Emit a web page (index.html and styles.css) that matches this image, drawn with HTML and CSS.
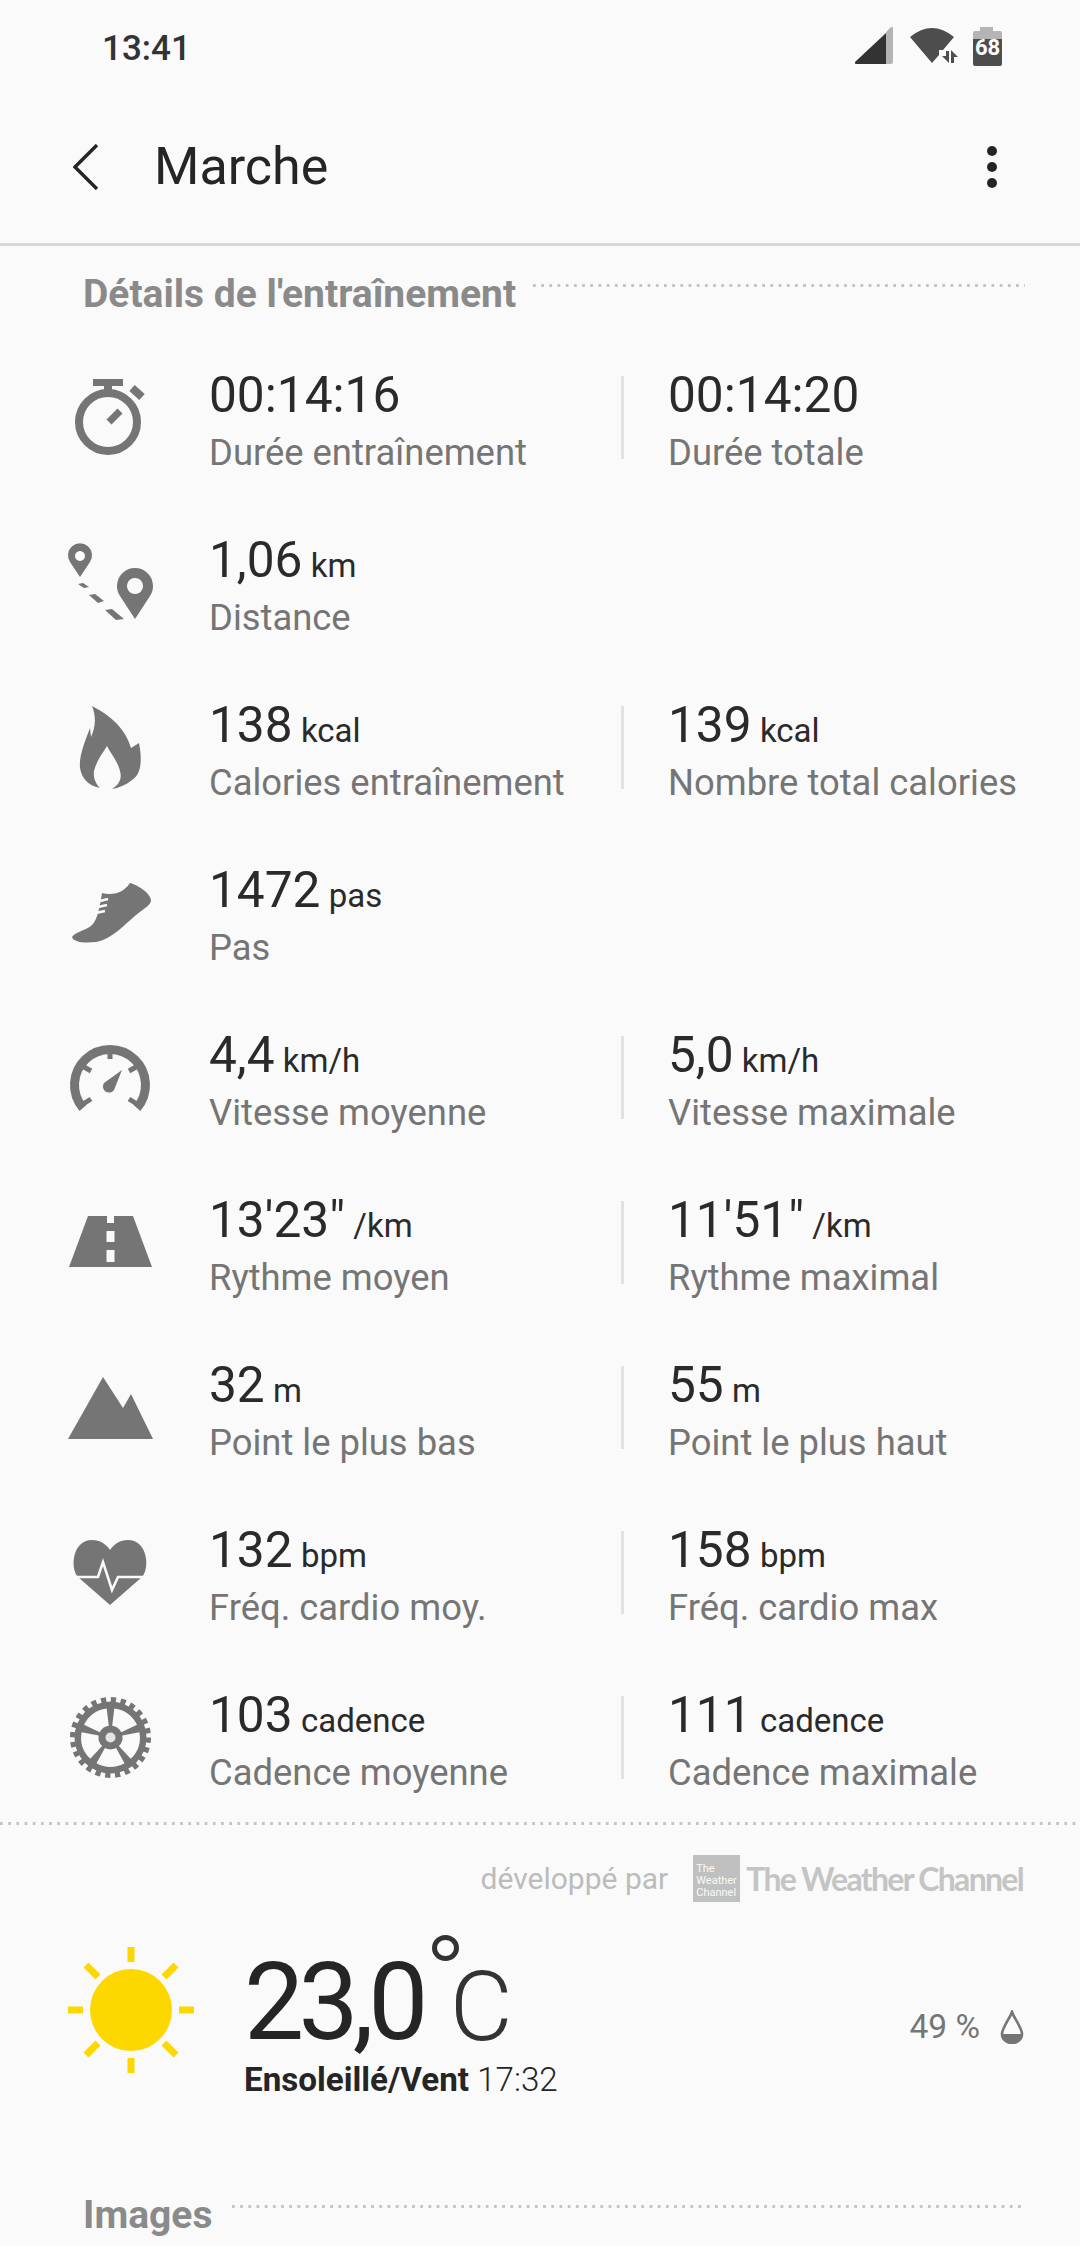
FILE: index.html
```html
<!DOCTYPE html>
<html lang="fr">
<head>
<meta charset="utf-8">
<title>Marche</title>
<link rel="stylesheet" href="styles.css">
</head>
<body>
<div class="page">
  <div class="status">
    <span class="time">13:41</span>
    <div class="status-icons">
      <svg class="st-signal" width="38" height="38" viewBox="0 0 38 38"><path d="M31 7 L0 36 Q-1 38 2 38 L31 38Z" fill="#333"/><path d="M31 6 L36 1 Q38 0 38 2 V36 Q38 38 36 38 H31Z" fill="#b4b4b4"/></svg>
      <svg class="st-wifi" width="48" height="36" viewBox="0 0 48 36"><path d="M1 10 Q23 -8 45 10 L34 23 H30 V28 L23 36Z" fill="#4d4d4d"/><path d="M37 24H40V36L33 29H37Z M42 23L49 30H45V36H42Z" fill="#4d4d4d"/></svg>
      <svg class="st-batt" width="29" height="39" viewBox="0 0 29 39"><path d="M7 0H20V4H27Q29 4 29 6V12H0V6Q0 4 2 4H7Z" fill="#b4b4b4"/><path d="M0 12H29V37Q29 39 27 39H2Q0 39 0 37Z" fill="#4d4d4d"/><text class="batt-num" x="14.500" y="27.500" text-anchor="middle">68</text></svg>
    </div>
  </div>
  <header class="bar">
    <svg class="back" width="26" height="46" viewBox="0 0 26 46"><path d="M24 1 L2 23 L24 45" fill="none" stroke="#252525" stroke-width="3.4"/></svg>
    <h1 class="title">Marche</h1>
    <div class="more"><i></i><i></i><i></i></div>
  </header>

  <div class="sec sec-first"><h2>Détails de l'entraînement</h2><span class="dots"></span></div>

  <section class="rows">
    <div class="row">
      <svg class="ic" viewBox="0 0 90 90"><circle cx="42" cy="44" r="29" fill="none" stroke="#757575" stroke-width="8"/><path d="M27 1H57V8H46V14H38V8H27Z" fill="#757575"/><path d="M66 10L76 19" stroke="#757575" stroke-width="8"/><path d="M43 44L54 33" stroke="#757575" stroke-width="7"/></svg>
      <div class="cell"><div class="val">00:14:16</div><div class="lab">Durée entraînement</div></div>
      <div class="cell cell-r"><div class="val">00:14:20</div><div class="lab">Durée totale</div></div>
    </div>
    <div class="row">
      <svg class="ic" viewBox="0 0 90 90"><path fill-rule="evenodd" d="M14 34 L4 19 A12 12 0 1 1 24 19Z M14 8 a5 5 0 1 0 .01 0Z" fill="#757575"/><path fill-rule="evenodd" d="M69 76 L54 53 A18 18 0 1 1 84 53Z M69 35 a8 8 0 1 0 .01 0Z" fill="#757575"/><path d="M12 41L17 40L23 44L18 45Z M23 52L29 51L38 58L32 60Z M39 67L46 66L58 76L50 77Z" fill="#757575"/></svg>
      <div class="cell"><div class="val">1,06 <small>km</small></div><div class="lab">Distance</div></div>
    </div>
    <div class="row">
      <svg class="ic" viewBox="0 0 90 90"><path d="M26 -2 C46 8 60 22 65 40 L73 35 C76 50 76 66 66 72 C60 77 52 80 46 81 C54 76 56 70 54 63 C52 54 45 46 41 38 C36 46 30 54 28 63 C27 70 30 76 34 80 C24 78 16 72 14 60 C13 48 18 36 24 20 L25 29 C30 18 30 8 26 -2Z" fill="#757575"/></svg>
      <div class="cell"><div class="val">138 <small>kcal</small></div><div class="lab">Calories entraînement</div></div>
      <div class="cell cell-r"><div class="val">139 <small>kcal</small></div><div class="lab">Nombre total calories</div></div>
    </div>
    <div class="row">
      <svg class="ic" viewBox="0 0 90 90"><path d="M6 64 C10 58 20 58 26 52 C32 46 34 32 36 20 C44 22 56 22 64 10 C72 12 84 20 85 27 C85 32 80 34 70 42 C58 52 46 66 30 69 C20 70 8 70 6 64Z" fill="#757575"/><path d="M34 28L42 26M32 34L41 32M30 40L39 38" stroke="#fafafa" stroke-width="2.4"/></svg>
      <div class="cell"><div class="val">1472 <small>pas</small></div><div class="lab">Pas</div></div>
    </div>
    <div class="row">
      <svg class="ic" viewBox="0 0 90 90"><path d="M17 70 A35.500 35.500 0 1 1 71 70" fill="none" stroke="#757575" stroke-width="9"/><path d="M44 12V21M18 29L25 33M70 29L63 33M17 66L25 61M71 66L63 61" stroke="#757575" stroke-width="5"/><path d="M56 32L48 52A6 6 0 1 1 38 45Z" fill="#757575"/></svg>
      <div class="cell"><div class="val">4,4 <small>km/h</small></div><div class="lab">Vitesse moyenne</div></div>
      <div class="cell cell-r"><div class="val">5,0 <small>km/h</small></div><div class="lab">Vitesse maximale</div></div>
    </div>
    <div class="row">
      <svg class="ic" viewBox="0 0 90 90"><path d="M22 13H41V20H48V13H67L86 64H3Z M40.500 28V39H48.500V28Z M40.500 47V59H48.500V47Z" fill-rule="evenodd" fill="#757575"/></svg>
      <div class="cell"><div class="val">13'23" <small>/km</small></div><div class="lab">Rythme moyen</div></div>
      <div class="cell cell-r"><div class="val">11'51" <small>/km</small></div><div class="lab">Rythme maximal</div></div>
    </div>
    <div class="row">
      <svg class="ic" viewBox="0 0 90 90"><path d="M2 71L37 9L57 40L65 26L87 71Z" fill="#757575"/></svg>
      <div class="cell"><div class="val">32 <small>m</small></div><div class="lab">Point le plus bas</div></div>
      <div class="cell cell-r"><div class="val">55 <small>m</small></div><div class="lab">Point le plus haut</div></div>
    </div>
    <div class="row">
      <svg class="ic" viewBox="0 0 90 90"><path d="M44 72L12 44C4 36 6 7 26 7C34 7 40 11 44 17C48 11 54 7 62 7C82 7 84 36 76 44Z" fill="#757575"/><path d="M9 44H32L37 29L46 57L52 44H79" fill="none" stroke="#fafafa" stroke-width="2.500"/></svg>
      <div class="cell"><div class="val">132 <small>bpm</small></div><div class="lab">Fréq. cardio moy.</div></div>
      <div class="cell cell-r"><div class="val">158 <small>bpm</small></div><div class="lab">Fréq. cardio max</div></div>
    </div>
    <div class="row">
      <svg class="ic" viewBox="0 0 90 90"><circle cx="44.500" cy="39.500" r="37.500" fill="none" stroke="#757575" stroke-width="6" stroke-dasharray="5.200 4.620"/><circle cx="44.500" cy="39.500" r="36" fill="#757575"/><g transform="translate(44.500 39.500)" fill="#fafafa"><path d="M-5.600 10.600L-14 25.800A29.500 29.500 0 0 0 14 25.800L5.600 10.600A12 12 0 0 1 -5.600 10.600Z"/><path transform="rotate(72)" d="M-5.600 10.600L-14 25.800A29.500 29.500 0 0 0 14 25.800L5.600 10.600A12 12 0 0 1 -5.600 10.600Z"/><path transform="rotate(144)" d="M-5.600 10.600L-14 25.800A29.500 29.500 0 0 0 14 25.800L5.600 10.600A12 12 0 0 1 -5.600 10.600Z"/><path transform="rotate(216)" d="M-5.600 10.600L-14 25.800A29.500 29.500 0 0 0 14 25.800L5.600 10.600A12 12 0 0 1 -5.600 10.600Z"/><path transform="rotate(288)" d="M-5.600 10.600L-14 25.800A29.500 29.500 0 0 0 14 25.800L5.600 10.600A12 12 0 0 1 -5.600 10.600Z"/><circle r="5" fill="#e4e4e4"/></g></svg>
      <div class="cell"><div class="val">103 <small>cadence</small></div><div class="lab">Cadence moyenne</div></div>
      <div class="cell cell-r"><div class="val">111 <small>cadence</small></div><div class="lab">Cadence maximale</div></div>
    </div>
  </section>

  <div class="rule"></div>

  <div class="credit">
    <span class="by">développé par</span>
    <div class="logo"><span>The</span><span>Weather</span><span>Channel</span></div>
    <span class="brand">The Weather Channel</span>
  </div>

  <div class="weather">
    <svg class="sun" width="132" height="132" viewBox="-66 -66 132 132"><circle r="41" fill="#fdd800"/><g stroke="#fdd800" stroke-width="7"><path d="M0 -63V-48M0 63V48M-63 0H-48M63 0H48M-45 -45L-33 -33M45 -45L33 -33M-45 45L-33 33M45 45L33 33"/></g></svg>
    <div class="w-main">
      <div class="temp"><span class="t-num">23,0</span><span class="t-deg"></span><span class="t-c">C</span></div>
      <div class="w-sub"><b>Ensoleillé/Vent</b> 17:32</div>
    </div>
    <div class="hum"><span>49 %</span>
      <svg width="24" height="34" viewBox="0 0 24 34"><path d="M12 2 C10 8 2 18 2 24 A10 9 0 0 0 22 24 C22 18 14 8 12 2Z" fill="none" stroke="#757575" stroke-width="2.600"/><path d="M1 24 H23 A11 10 0 0 1 1 24Z" fill="#757575"/></svg>
    </div>
  </div>

  <div class="sec sec-img"><h2>Images</h2><span class="dots"></span></div>
</div>
</body>
</html>
```
FILE: styles.css
```css
* { box-sizing: border-box; }
html, body { margin: 0; padding: 0; }
body { background: #fafafa; font-family: Roboto, "Noto Sans", sans-serif; width: 1080px; height: 2246px; overflow: hidden; }
.page { width: 1080px; height: 2246px; overflow: hidden; }

.status { height: 96px; display: flex; align-items: flex-start; justify-content: space-between; padding: 27px 78px 0 102px; }
.time { font-size: 35px; font-weight: 500; color: #333; line-height: 44px; }
.status-icons { display: flex; align-items: flex-start; margin-top: -1px; }
.st-wifi { margin: 1px 16px 0 16px; overflow: visible; }
.st-batt { margin-top: 1px; }
.batt-num { fill: #fff; font-size: 22px; font-weight: 700; font-family: Roboto, sans-serif; }

.bar { height: 150px; border-bottom: 3px solid #d8d8d8; display: flex; align-items: center; padding: 0 0 0 73px; }
.back { flex: none; margin-bottom: 5px; }
.title { margin: 0 0 6px 55px; font-size: 52px; font-weight: 400; color: #252525; flex: 1; line-height: 60px; }
.more { width: 12px; margin-right: 82px; display: flex; flex-direction: column; gap: 6px; margin-bottom: 6px; }
.more i { width: 10px; height: 10px; border-radius: 50%; background: #252525; display: block; margin: 0 1px; }

.sec { display: flex; align-items: flex-start; padding-left: 83px; padding-right: 55px; }
.sec h2 { margin: 0; font-size: 39px; font-weight: 700; color: #8a8a8a; line-height: 48px; white-space: nowrap; }
.dots { flex: 1; height: 3px; background-image: linear-gradient(90deg, #c4c4c4 3px, transparent 3px); background-size: 8.200px 3px; background-repeat: repeat-x; }
.sec-first { padding-top: 24px; height: 93px; }
.sec-first .dots { margin: 14px 0 0 17px; }
.sec-img .dots { margin: 14px 0 0 20px; }

.row { height: 165px; display: grid; grid-template-columns: 66px 90px 53px 413px 46px 1fr; align-items: center; }
.ic { grid-column: 2; width: 90px; height: 90px; overflow: visible; margin-top: 3px; }
.cell { grid-column: 4; white-space: nowrap; }
.cell-r { grid-column: 5 / 7; padding-left: 46px; position: relative; }
.cell-r::before { content: ""; position: absolute; left: -1px; top: 10px; height: 83px; width: 3px; background: #e2e2e2; }
.val { font-size: 49.600px; color: #2a2a2a; line-height: 58px; word-spacing: -4px; }
.val small { font-size: 33px; line-height: 0; }
.lab { font-size: 36.400px; color: #757575; line-height: 48px; margin-top: 5px; }

.rule { height: 3px; margin-top: -2px; background-image: linear-gradient(90deg, #c4c4c4 3px, transparent 3px); background-size: 8.200px 3px; background-repeat: repeat-x; }
.credit { display: flex; justify-content: flex-end; align-items: center; height: 70px; margin-top: 18px; padding-right: 57px; }
.by { font-size: 30px; color: #bcbcbc; margin-right: 25px; }
.logo { width: 47px; height: 47px; background: #c0c0c0; color: #fafafa; font-size: 11px; line-height: 12px; padding: 6px 0 3px 3px; display: flex; flex-direction: column; justify-content: flex-end; margin-right: 6px; }
.brand { font-family: Lato, "Liberation Sans", sans-serif; font-weight: 700; font-size: 32px; color: #c4c4c4; letter-spacing: -1.700px; }

.weather { display: grid; grid-template-columns: 65px 132px 47px 1fr auto; height: 278px; align-items: start; padding-right: 56px; }
.sun { grid-column: 2; margin-top: 31px; }
.w-main { grid-column: 4; padding-top: 31px; }
.temp { display: flex; align-items: flex-start; height: 114px; color: #252525; }
.t-num { font-size: 107px; line-height: 118px; letter-spacing: -5.700px; }
.t-deg { width: 27px; height: 26px; border: 5px solid #333; border-radius: 50%; margin: -9px 0 0 9px; flex: none; }
.t-c { font-size: 97px; font-weight: 300; line-height: 118px; margin: 4px 0 0 -9px; color: #333; }
.w-sub { font-size: 33.200px; color: #252525; font-weight: 300; line-height: 44px; }
.w-sub b { font-weight: 700; }
.hum { grid-column: 5; display: flex; align-items: center; gap: 20px; margin-top: 94px; font-size: 33.500px; color: #757575; }
```
